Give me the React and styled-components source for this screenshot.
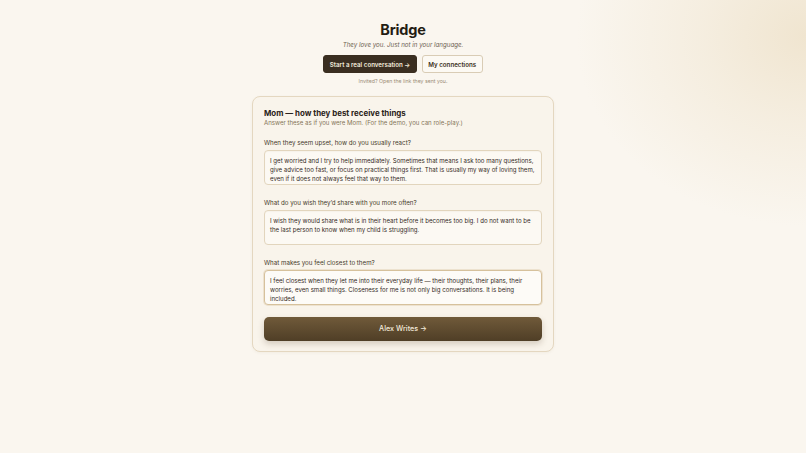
import React from 'react'
import styled, { createGlobalStyle } from 'styled-components'

const GlobalStyle = createGlobalStyle`
  html, body {
    margin: 0;
    padding: 0;
  }
  body {
    font-family: Inter, "Liberation Sans", sans-serif;
    background-color: #faf6ef;
    background-image: radial-gradient(ellipse 230px 190px at 100% 8%, #f0e5d0 0%, rgba(240, 229, 208, 0.5) 45%, rgba(250, 246, 239, 0) 100%);
    min-height: 453px;
    color: #2c241a;
  }
`

const Page = styled.div`
  display: flex;
  flex-direction: column;
  align-items: center;
  padding-top: 19px;
`

const Title = styled.h1`
  margin: 0;
  font-size: 14.5px;
  font-weight: 700;
  letter-spacing: -0.01em;
  line-height: 21px;
  color: #231c13;
`

const Tagline = styled.p`
  margin: 0 0 6px;
  font-size: 6.2px;
  font-style: italic;
  color: #6e6252;
  line-height: 9px;
`

const Actions = styled.div`
  display: flex;
  gap: 5px;
`

const TopButton = styled.button`
  height: 18px;
  padding: 0 5.5px;
  border-radius: 3px;
  font-family: inherit;
  font-size: 6.2px;
  font-weight: 600;
  cursor: pointer;
  border: 1px solid ${props => (props.primary ? '#3a2e21' : '#d9ccb5')};
  background: ${props => (props.primary ? '#3a2e21' : '#fcf9f3')};
  color: ${props => (props.primary ? '#f3ebdc' : '#3a2e21')};
`

const Hint = styled.p`
  margin: 4px 0 0;
  font-size: 5.2px;
  color: #9a8c76;
  line-height: 8px;
`

const Card = styled.section`
  margin-top: 11px;
  width: 278px;
  padding: 11px 11px 10px;
  background: #f9f4eb;
  border: 1px solid #e4d7c0;
  border-radius: 8px;
  box-shadow: 0 1px 3px rgba(120, 95, 55, 0.06);
`

const CardTitle = styled.h2`
  margin: 0;
  font-size: 7.9px;
  font-weight: 700;
  line-height: 11px;
  color: #2a2218;
`

const CardSub = styled.p`
  margin: 0 0 10px;
  font-size: 6.1px;
  color: #857459;
  line-height: 8px;
`

const Field = styled.label`
  display: flex;
  flex-direction: column;
  gap: 3px;
  margin-bottom: 12px;

  &:last-of-type {
    margin-bottom: 10px;
  }
`

const Question = styled.span`
  font-size: 6.2px;
  color: #45392a;
  line-height: 9px;
  padding-top: 1px;
`

const Answer = styled.textarea`
  box-sizing: border-box;
  width: 100%;
  height: 35px;
  resize: none;
  padding: 5px 5px 3px;
  font-family: inherit;
  font-size: 6.1px;
  line-height: 9px;
  color: #34291d;
  background: ${props => (props.focused ? '#fdfbf7' : '#fcf9f3')};
  border: 1px solid ${props => (props.focused ? '#d6c19c' : '#e2d5bd')};
  border-radius: 4px;
  box-shadow: ${props => (props.focused ? '0 0 0 1px rgba(214, 193, 156, 0.35)' : 'inset 0 1px 1px rgba(120, 95, 55, 0.04)')};
  outline: none;
  overflow: hidden;
`

const Submit = styled.button`
  width: 100%;
  height: 24px;
  border: none;
  border-radius: 5px;
  background: linear-gradient(180deg, #705a3a 0%, #4f3e26 100%);
  color: #f3eadb;
  font-family: inherit;
  font-size: 7.2px;
  font-weight: 500;
  box-shadow: 0 3px 6px rgba(80, 60, 30, 0.22);
  cursor: pointer;
`

const questions = [
  {
    q: 'When they seem upset, how do you usually react?',
    a: 'I get worried and I try to help immediately. Sometimes that means I ask too many questions, give advice too fast, or focus on practical things first. That is usually my way of loving them, even if it does not always feel that way to them.',
  },
  {
    q: 'What do you wish they\u2019d share with you more often?',
    a: 'I wish they would share what is in their heart before it becomes too big. I do not want to be the last person to know when my child is struggling.',
  },
  {
    q: 'What makes you feel closest to them?',
    a: 'I feel closest when they let me into their everyday life \u2014 their thoughts, their plans, their worries, even small things. Closeness for me is not only big conversations. It is being included.',
    focused: true,
  },
]

function App() {
  return (
    <>
      <GlobalStyle />
      <Page>
        <Title>Bridge</Title>
        <Tagline>They love you. Just not in your language.</Tagline>
        <Actions>
          <TopButton primary>Start a real conversation →</TopButton>
          <TopButton>My connections</TopButton>
        </Actions>
        <Hint>Invited? Open the link they sent you.</Hint>

        <Card>
          <CardTitle>Mom — how they best receive things</CardTitle>
          <CardSub>Answer these as if you were Mom. (For the demo, you can role-play.)</CardSub>
          {questions.map(item => (
            <Field key={item.q}>
              <Question>{item.q}</Question>
              <Answer defaultValue={item.a} focused={item.focused} spellCheck={false} />
            </Field>
          ))}
          <Submit>Alex Writes →</Submit>
        </Card>
      </Page>
    </>
  )
}

export default App
